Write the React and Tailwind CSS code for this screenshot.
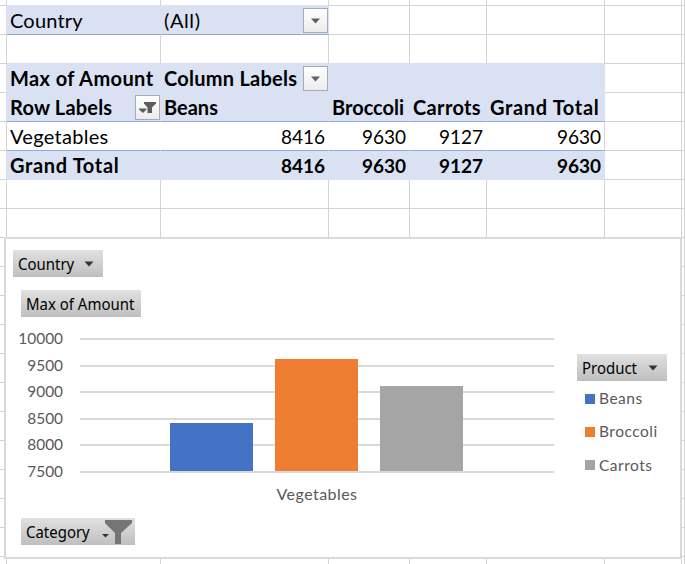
const COLS = 'grid grid-cols-[7px_154px_168px_81px_77px_118px_77px_3px]';
const LINE = 'border-[#d4d4d4]';
const FILL = 'bg-[#d9e1f2] border-[#d9e1f2]';
const FILL_BLUE = 'bg-[#d9e1f2] border-r-[#d9e1f2] border-b-[#8ea9db]';

function Cell({ className = '', children }) {
  return (
    <div className={`flex items-center border-r border-b whitespace-nowrap min-w-0 ${className}`}>
      {children}
    </div>
  );
}

function LabelCell({ text, tracking = '', className, children }) {
  return (
    <Cell className={`pt-[2px] pl-[3px] ${className}`}>
      <span className={`pb-[2px] text-[20px] leading-[24px] ${tracking}`}>{text}</span>
      {children}
    </Cell>
  );
}

function NumberCell({ value, className }) {
  return <Cell className={`justify-end pt-[2px] pr-[3px] leading-[26px] ${className}`}>{value}</Cell>;
}

function BlankRow() {
  return (
    <div className={`${COLS} h-[29px] shrink-0`}>
      {[0, 1, 2, 3, 4, 5, 6, 7].map((i) => (
        <Cell key={i} className={LINE} />
      ))}
    </div>
  );
}

function FilterButton({ funnel = false }) {
  return (
    <span className="ml-auto flex size-[25px] shrink-0 self-start border border-[#a3abb8] bg-linear-to-b from-white to-[#ececef]">
      <svg viewBox="0 0 23 23" className="size-[23px]">
        {funnel ? (
          <g fill="#5c5c5c">
            <path d="M8 6H20V7.5L16 11.5V17H11.5V11.5L8 7.5Z" />
            <path d="M3 12.5H10.5V13.5L7 17L3 13.5Z" />
          </g>
        ) : (
          <path d="M7 9.5H16L11.5 14.5Z" fill="#606060" />
        )}
      </svg>
    </span>
  );
}

function Table() {
  return (
    <div className="flex flex-col text-[19px] text-black">
      <div className={`${COLS} h-[6px]`}>
        <Cell className={LINE} />
        <Cell className="border-r-[#d4d4d4] border-b-[#d9e1f2]" />
        <Cell className="border-r-[#d4d4d4] border-b-[#d9e1f2]" />
        {[0, 1, 2, 3, 4].map((i) => <Cell key={i} className={LINE} />)}
      </div>

      <div className={`${COLS} h-[29px]`}>
        <Cell className="border-r-[#d9e1f2] border-b-[#d4d4d4]" />
        <LabelCell text="Country" tracking="tracking-[0.2px]" className={FILL_BLUE} />
        <LabelCell text="(All)" tracking="tracking-[0.6px]" className={FILL_BLUE}><FilterButton /></LabelCell>
        {[0, 1, 2, 3, 4].map((i) => <Cell key={i} className={LINE} />)}
      </div>

      <div className={`${COLS} h-[29px]`}>
        <Cell className={LINE} />
        {[0, 1, 2, 3, 4].map((i) => <Cell key={i} className="border-r-[#d4d4d4] border-b-[#d9e1f2]" />)}
        <Cell className={LINE} />
        <Cell className={LINE} />
      </div>

      <div className={`${COLS} h-[29px] font-bold`}>
        <Cell className="border-r-[#d9e1f2] border-b-[#d4d4d4]" />
        <LabelCell text="Max of Amount" tracking="tracking-[0.4px]" className={FILL} />
        <LabelCell text="Column Labels" tracking="tracking-[0.25px]" className={FILL}><FilterButton /></LabelCell>
        <Cell className={FILL} />
        <Cell className={FILL} />
        <Cell className={FILL} />
        <Cell className={LINE} />
        <Cell className={LINE} />
      </div>

      <div className={`${COLS} h-[29px] font-bold`}>
        <Cell className="border-r-[#d9e1f2] border-b-[#d4d4d4]" />
        <LabelCell text="Row Labels" tracking="tracking-[0.2px]" className={FILL_BLUE}><FilterButton funnel /></LabelCell>
        <LabelCell text="Beans" className={FILL_BLUE} />
        <LabelCell text="Broccoli" className={FILL_BLUE} />
        <LabelCell text="Carrots" tracking="tracking-[0.35px]" className={FILL_BLUE} />
        <LabelCell text="Grand Total" tracking="tracking-[0.65px]" className={FILL_BLUE} />
        <Cell className={LINE} />
        <Cell className={LINE} />
      </div>

      <div className={`${COLS} h-[29px]`}>
        <Cell className={LINE} />
        <LabelCell text="Vegetables" tracking="tracking-[0.3px]" className="border-r-white border-b-[#8ea9db]" />
        {['8416', '9630', '9127'].map((t) => (
          <NumberCell key={t} value={t} className="border-r-white border-b-[#8ea9db]" />
        ))}
        <NumberCell value="9630" className="border-r-[#d4d4d4] border-b-[#8ea9db]" />
        <Cell className={LINE} />
        <Cell className={LINE} />
      </div>

      <div className={`${COLS} h-[29px] font-bold`}>
        <Cell className="border-r-[#d9e1f2] border-b-[#d4d4d4]" />
        <LabelCell text="Grand Total" tracking="tracking-[0.65px]" className={FILL} />
        {['8416', '9630', '9127', '9630'].map((t, i) => (
          <NumberCell key={i} value={t} className={FILL} />
        ))}
        <Cell className={LINE} />
        <Cell className={LINE} />
      </div>

      {Array.from({ length: 14 }, (_, i) => <BlankRow key={i} />)}
    </div>
  );
}

function FieldButton({ label, className, children }) {
  return (
    <div className={`flex h-[27px] shrink-0 items-center bg-linear-to-b from-[#e1e1e1] to-[#bfbfbf] pl-[5px] font-['Noto_Sans',sans-serif] text-[16px] leading-[26px] whitespace-nowrap text-black ${className}`}>
      <span className="inline-block origin-left scale-x-[.935]">{label}</span>
      {children}
    </div>
  );
}

function Caret() {
  return (
    <svg viewBox="0 0 10 6" className="mr-[9px] ml-auto h-[6px] w-[10px] shrink-0">
      <path d="M0.5 0.5H9.5L5 5.5Z" fill="#333" />
    </svg>
  );
}

const BARS = [
  { name: 'Beans', color: 'bg-[#4472c4]', height: 48 },
  { name: 'Broccoli', color: 'bg-[#ed7d31]', height: 112 },
  { name: 'Carrots', color: 'bg-[#a5a5a5]', height: 85 },
];

function Plot() {
  return (
    <div className="mt-[8px] flex h-[161px]">
      <div className="flex w-[57px] flex-col text-right text-[15.4px] leading-[26.6px] text-[#595959]">
        {['10000', '9500', '9000', '8500', '8000', '7500'].map((t) => <span key={t}>{t}</span>)}
      </div>
      <div className="mt-[13px] ml-[17px] grid h-[135px] w-[474px]">
        <div className="col-start-1 row-start-1 flex flex-col justify-between">
          {[0, 1, 2, 3, 4, 5].map((i) => <div key={i} className="h-[2px] bg-[#d9d9d9]" />)}
        </div>
        <div className="col-start-1 row-start-1 flex items-end gap-[22px] pb-[2px] pl-[90px]">
          {BARS.map((b) => (
            <div key={b.name} className={`w-[83px] ${b.color}`} style={{ height: b.height }} />
          ))}
        </div>
      </div>
    </div>
  );
}

function Chart() {
  return (
    <div className="absolute top-[237px] left-[4px] flex h-[322px] w-[678px] border-2 border-[#d9d9d9] bg-white">
      <div className="flex w-[548px] flex-col pt-[11px]">
        <FieldButton label="Country" className="ml-[7px] w-[90px]"><Caret /></FieldButton>
        <FieldButton label="Max of Amount" className="mt-[13px] ml-[15px] w-[120px]" />
        <Plot />
        <div className="-mt-[4px] ml-[74px] w-[474px] text-center text-[16px] leading-[24px] tracking-[0.45px] text-[#595959]">Vegetables</div>
        <FieldButton label="Category" className="mt-[12px] ml-[15px] w-[114px]">
          <svg viewBox="0 0 32 27" className="mr-[2px] ml-auto h-[27px] w-[32px] shrink-0">
            <path d="M1 16H8L4.5 19.5Z" fill="#333" />
            <path d="M4 2H31V5L20 15V26H14V15L4 5Z" fill="#757575" />
          </svg>
        </FieldButton>
      </div>
      <div className="flex flex-col pt-[115px] pl-[23px]">
        <FieldButton label="Product" className="w-[90px]"><Caret /></FieldButton>
        <div className="mt-[1px] ml-[8px] flex flex-col text-[15.5px] tracking-[0.5px] text-[#595959]">
          {BARS.map((b) => (
            <div key={b.name} className="flex h-[33.3px] items-center gap-[4px]">
              <span className={`size-[10px] ${b.color}`} />
              <span>{b.name}</span>
            </div>
          ))}
        </div>
      </div>
    </div>
  );
}

export default function App() {
  return (
    <div className="relative h-[564px] w-[685px] overflow-hidden bg-white font-['Lato',sans-serif]">
      <Table />
      <Chart />
    </div>
  );
}
